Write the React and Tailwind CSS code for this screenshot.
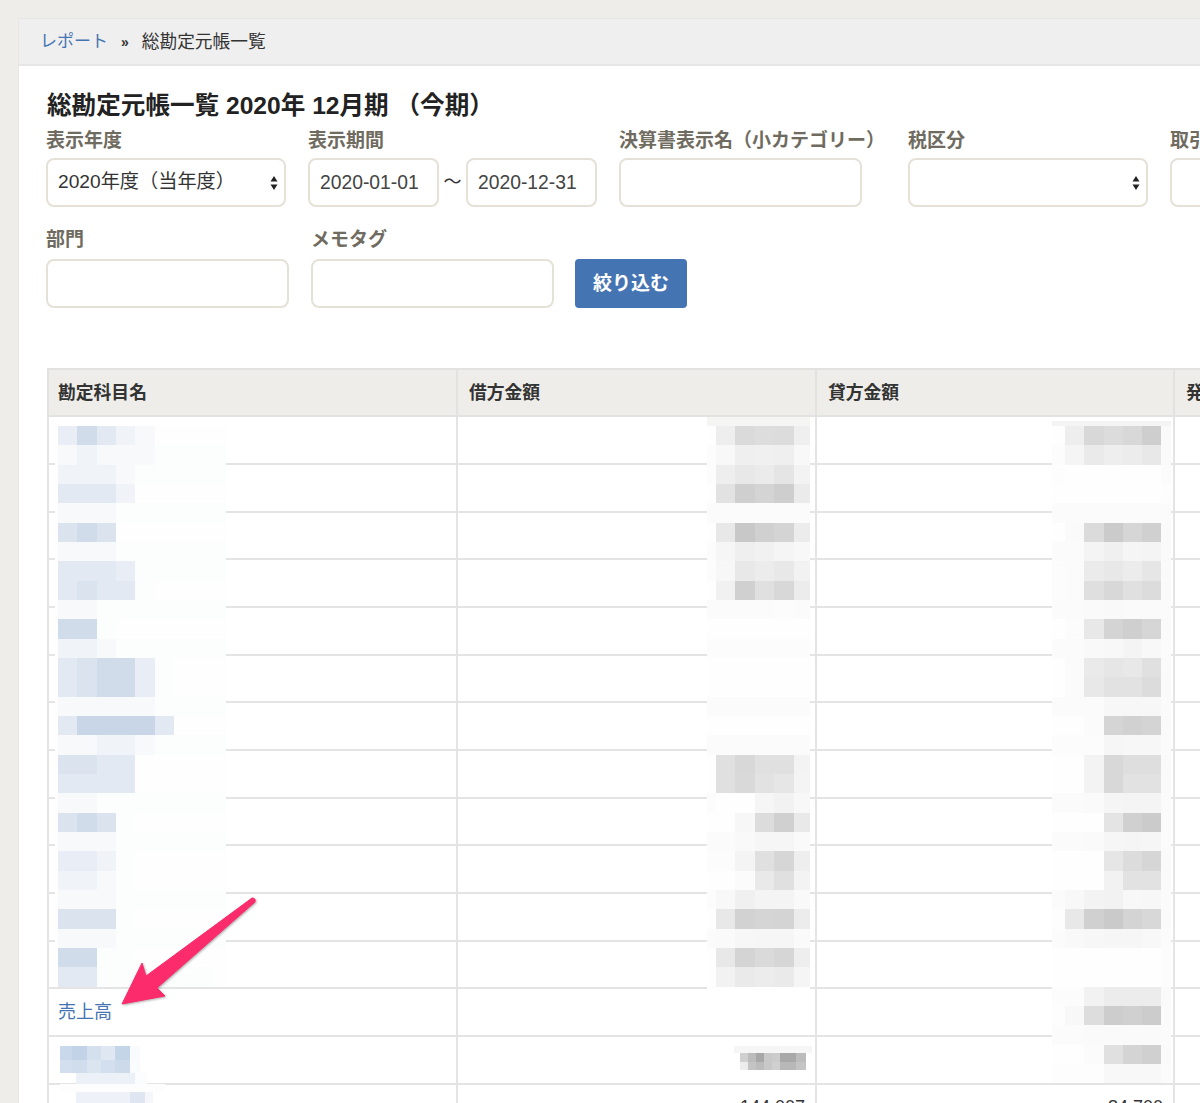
const FONT = "[font-family:'Liberation_Sans','Noto_Sans_CJK_JP',sans-serif]";

// Blurred blocks over the table (the original amounts and account names are hidden)
const BLUE = {
  a: '#fcfdfd', b: '#f7f9fb', c: '#f0f3f7', d: '#e9eef6', e: '#e3e9f2',
  f: '#dbe3ef', g: '#d1dcea', h: '#c8d6e8',
};

const LEFT_X = [58, 77.3, 96.7, 116, 135.3, 154.7, 174, 193.3, 212.7, 225.5];
const LEFT_ROWS = [
  'd g e c b', 'b c b b b a a a a', 'c c c b a a a a a', 'e e e c',
  'b b b a a a a a a', 'f g f', 'b b b a a a a a a', 'e e e d a a a a a',
  'e f e e a', 'b b a a a a a a a', 'g g a', 'c c b a a a a a a',
  'e f g g d a', 'e f g g d a', 'b b b b b a a a a', 'e h h h h e',
  'b b c c b a a a a', 'f f e e', 'e e e e', 'b b a a a a a a a',
  'f g f a', 'b b b a a a a a a', 'd d c a', 'c c b a', 'b b b a a a a a a',
  'f f f a', 'b b b a a a a a a', 'g g a a', 'e e a a a a a a',
];

const MID_X = [707, 716, 735, 755, 774, 794, 810];
const MID_ROWS = [
  '-- ee da dd dc ef', 'fc f8 ef f0 ef f8', 'fc ee e8 eb e5 f3', '-- e2 cf d4 ce eb',
  'fb fb fb fb fb fb', '-- e8 c8 d0 d4 ec', 'fc f6 ef f1 f5 f8', 'fc f7 e8 ec e8 f2',
  '-- f1 d0 e0 d8 ec', 'fb fb fb fb fc fb', 'fe fe fe fe fe fe', 'fc fc fc fc fc fc',
  'fe fe fe fe fe fe', 'fe fe fe fe fe fe', 'fb fb fb fb fb fb', 'fe fe fe fe fe fe',
  'fb fb fb fb fb fb', '-- e0 d8 e0 e0 f3', '-- e0 d9 e2 e6 f4', 'fc -- -- f6 f2 f8',
  '-- -- f7 dc d0 e9', 'fb fb f9 f6 f6 fa', 'fc fc f4 e0 d6 ee', 'fe fe fb e9 e0 f3',
  'fc f8 f0 f4 f4 f9', 'fe e8 d2 d5 d4 ec', 'fb fa f7 f6 f6 fa', 'fe e8 d4 da d6 ee',
  'fe f2 ea ec ea f5',
];

const RIGHT_X = [1052, 1065, 1084, 1104, 1123, 1142, 1161, 1171];
const RIGHT_ROWS = [
  '-- ee d8 dc d8 ce fa', 'fc f5 ea ee ec e8 fa', 'fd -- -- -- -- -- fb', '-- -- -- -- -- -- fd',
  'fb fb fb fb fb fb fb', '-- fa db cb d6 d0 fa', 'fb fb f4 f0 f5 f4 fa', 'fc fb eb e8 ec e6 fa',
  'fc fb df d8 e0 dc fa', 'fb fb fa f9 fa fa fb', '-- fc e8 d4 cf d6 fa', 'fb fb f9 f8 f4 f8 fb',
  '-- fb ea e6 e8 e0 fa', '-- fb e8 e2 e2 dc fa', 'fb fb fb f7 f7 f7 fb', '-- -- fb d5 d1 d4 fa',
  'fc fc fc f6 f7 f7 fb', '-- -- f3 d8 de de fa', '-- -- f3 d8 e2 e2 fa', 'fb fb fa f5 f4 f4 fb',
  '-- -- -- e4 d0 cb fb', 'fb fb fa f6 f5 f6 fb', '-- -- -- e6 dc d6 fa', '-- -- -- f2 e2 e2 fa',
  'fb f8 f3 f2 f8 f7 fb', 'fd e8 d0 ca d4 d8 fa', 'fb f9 f7 f6 f6 f8 fb', '-- -- -- -- -- -- fc',
  '-- -- -- -- -- -- fc', 'fc fc f2 ec ec ec fa', 'fd f8 dd cd d0 cc fb', 'fb fb fa fa fa fa fb',
  '-- -- fb e0 d4 d0 fa', 'fd fd fd f8 f8 f8 fb',
];

const rowY = (k) => 426 + 19.33 * k;

function Blocks({ xs, rows, color }) {
  return rows.flatMap((row, k) =>
    row.split(' ').map((v, i) =>
      v === '--' ? null : (
        <rect
          key={`${xs[0]}-${k}-${i}`}
          x={xs[i]}
          y={rowY(k)}
          width={xs[i + 1] - xs[i]}
          height={19.4}
          fill={color(v)}
        />
      )
    )
  );
}

const grey = (v) => `#${v}${v}${v}`;
const blue = (v) => BLUE[v];

// The small blocks, finer than the rest
const SMALL = [
  [60, 1046, 12, 14, '#c9d8ea'], [72, 1046, 15, 14, '#c2d2e7'], [87, 1046, 14, 14, '#d4e0ee'],
  [101, 1046, 14, 14, '#dfe8f2'], [115, 1046, 15, 14, '#c5d5e8'], [130, 1046, 10, 14, '#f8fafc'],
  [60, 1060, 12, 13, '#d3dfee'], [72, 1060, 15, 13, '#d0ddec'], [87, 1060, 14, 13, '#dbe5f0'],
  [101, 1060, 14, 13, '#d3dfee'], [115, 1060, 15, 13, '#ccdaea'], [130, 1060, 10, 13, '#fafbfd'],
  [76, 1073, 59, 11, '#ecf1f7'], [135, 1073, 12, 11, '#fbfcfd'], [60, 1084, 105, 8, '#fdfdfe'],
  [76, 1092, 54, 11, '#eef2f8'], [130, 1092, 15, 11, '#dfe6f2'], [145, 1092, 8, 11, '#f4f6fa'],
  [734, 1046, 78, 7, '#f6f6f6'], [740, 1053, 8, 9, '#d0d0d0'], [748, 1053, 8, 9, '#bcbcbc'],
  [756, 1053, 8, 9, '#a8a8a8'], [764, 1053, 8, 9, '#c8c8c8'], [772, 1053, 8, 9, '#cccccc'],
  [780, 1053, 16, 9, '#a8a8a8'], [796, 1053, 10, 9, '#bcbcbc'], [740, 1062, 8, 8, '#ececec'],
  [748, 1062, 8, 8, '#c4c4c4'], [756, 1062, 8, 8, '#bcbcbc'], [764, 1062, 8, 8, '#c8c8c8'],
  [772, 1062, 8, 8, '#d0d0d0'], [780, 1062, 16, 8, '#b8b8b8'], [796, 1062, 10, 8, '#c4c4c4'],
];

function Overlay() {
  return (
    <svg className="absolute top-0 left-0 pointer-events-none" width="1200" height="1103" viewBox="0 0 1200 1103">
      <g shapeRendering="crispEdges">
        <rect x="55" y="426" width="170.5" height="560" fill="#fefefe" />
        <rect x="707" y="417" width="103" height="572" fill="#fefefe" />
        <rect x="707" y="417" width="103" height="9" fill="#f5f5f3" />
        <rect x="1052" y="421" width="119" height="662" fill="#fefefe" />
        <rect x="1052" y="421" width="119" height="5" fill="#f4f4f4" />
        <Blocks xs={LEFT_X} rows={LEFT_ROWS} color={blue} />
        <Blocks xs={MID_X} rows={MID_ROWS} color={grey} />
        <Blocks xs={RIGHT_X} rows={RIGHT_ROWS} color={grey} />
        {SMALL.map(([x, y, w, h, fill]) => (
          <rect key={`${x}-${y}`} x={x} y={y} width={w} height={h} fill={fill} />
        ))}
      </g>

      {/* Arrow */}
      <path
        d="M122 1004 L142 963 L146 976 L252 898 Q256 898 255 902 L157 988 L165 996 Z"
        fill="#fb2b6c"
        stroke="#fb2b6c"
        strokeWidth="1"
        strokeLinejoin="round"
        className="drop-shadow-[1px_1px_1px_rgba(0,0,0,0.3)]"
      />
    </svg>
  );
}

function SelectArrows() {
  return (
    <svg width="8" height="14" viewBox="0 0 8 14" className="shrink-0">
      <path d="M4 0 L7.5 5.5 H0.5 Z M4 14 L0.5 8.5 H7.5 Z" fill="#222" />
    </svg>
  );
}

function Label({ children }) {
  return <div className="h-5 leading-5 text-[19px] font-bold text-[#6f6b60] whitespace-nowrap">{children}</div>;
}

const boxClass = 'h-[49px] rounded-lg border-2 border-[#e6e1d6] bg-white text-[19.3px] pl-[10px] pr-[6px] outline-none';

function SelectBox({ value, width }) {
  return (
    <div className={`${boxClass} flex items-center justify-between text-[#333] ${width}`}>
      <span className="text-[19.2px]">{value}</span>
      <SelectArrows />
    </div>
  );
}

function TextBox({ value, width }) {
  return <input readOnly value={value || ''} className={`${boxClass} text-[#444] ${width}`} />;
}

const ROW_COUNT = 14;
const thClass = 'border-2 border-[#e2e2e0] bg-[#eeede9] h-[47.4px] pt-[1px] text-left text-[17.8px] font-bold text-[#333]';
const tdClass = 'border-2 border-[#e4e4e4] h-[47.67px] text-[18px] text-[#333] align-middle';

export default function App() {
  return (
    <div className={`relative w-[1200px] h-[1103px] overflow-hidden bg-[#eeede9] pl-[18px] pt-[18px] ${FONT}`}>
      <div className="w-[1400px] h-[1200px] bg-white border-l border-t border-[#e6e6e4]">

        {/* Breadcrumb */}
        <div className="flex items-center h-[47px] pt-[1px] bg-[#efefef] border-b-2 border-[#e6e6e6] pl-[21px] text-[17.7px]">
          <a className="text-[17px] text-[#4574b3]">レポート</a>
          <span className="ml-[13px] mr-[13px] text-[14px] font-bold text-[#333]">»</span>
          <span className="text-[#333]">総勘定元帳一覧</span>
        </div>

        <div className="pl-[27px] pt-[25px]">
          <h2 className="h-[30px] ml-[1px] leading-[30px] text-[24.6px] font-bold text-[#222] whitespace-nowrap">
            総勘定元帳一覧 2020年 12月期 （今期）
          </h2>

          {/* Filters */}
          <div className="flex mt-[10px]">
            <div className="w-[240px] mr-[22px]">
              <Label>表示年度</Label>
              <div className="mt-[7px]"><SelectBox value="2020年度（当年度）" width="w-[240px]" /></div>
            </div>
            <div className="w-[289px] mr-[22px]">
              <Label>表示期間</Label>
              <div className="flex items-center mt-[7px]">
                <TextBox value="2020-01-01" width="w-[131px]" />
                <span className="w-[27px] text-center text-[18px] text-[#333]">〜</span>
                <TextBox value="2020-12-31" width="w-[131px]" />
              </div>
            </div>
            <div className="w-[267px] mr-[22px]">
              <Label>決算書表示名（小カテゴリー）</Label>
              <div className="mt-[7px]"><TextBox width="w-[243px]" /></div>
            </div>
            <div className="w-[240px] mr-[22px]">
              <Label>税区分</Label>
              <div className="mt-[7px]"><SelectBox value="" width="w-[240px]" /></div>
            </div>
            <div className="w-[240px]">
              <Label>取引先</Label>
              <div className="mt-[7px]"><TextBox width="w-[240px]" /></div>
            </div>
          </div>

          <div className="flex items-end mt-[23px]">
            <div className="w-[243px] mr-[22px]">
              <Label>部門</Label>
              <div className="mt-[9px]"><TextBox width="w-[243px]" /></div>
            </div>
            <div className="w-[243px] mr-[21px]">
              <Label>メモタグ</Label>
              <div className="mt-[9px]"><TextBox width="w-[243px]" /></div>
            </div>
            <button className="w-[112px] h-[49px] pt-[1px] rounded bg-[#4574b3] text-white text-[19px] font-bold">
              絞り込む
            </button>
          </div>

          {/* Ledger table */}
          <table className="mt-[60px] ml-[1px] w-[1300px] table-fixed border-collapse">
            <colgroup>
              <col className="w-[409px]" />
              <col className="w-[359px]" />
              <col className="w-[358px]" />
              <col />
            </colgroup>
            <thead>
              <tr>
                <th className={`${thClass} px-[9px]`}>勘定科目名</th>
                <th className={`${thClass} px-[11px]`}>借方金額</th>
                <th className={`${thClass} px-[11px]`}>貸方金額</th>
                <th className={`${thClass} px-[11px]`}>発生額</th>
              </tr>
            </thead>
            <tbody>
              {Array.from({ length: ROW_COUNT }, (_, i) => (
                <tr key={i}>
                  <td className={`${tdClass} px-[9px]`}>{i === 12 && <a className="text-[#4574b3]">売上高</a>}</td>
                  <td className={tdClass}></td>
                  <td className={tdClass}></td>
                  <td className={tdClass}></td>
                </tr>
              ))}
              <tr>
                <td className={tdClass}></td>
                <td className={`${tdClass} px-[10px] text-right text-[17.5px]`}>144,007</td>
                <td className={`${tdClass} px-[10px] text-right text-[17.5px]`}>84,700</td>
                <td className={tdClass}></td>
              </tr>
            </tbody>
          </table>
        </div>
      </div>

      <Overlay />
    </div>
  );
}
